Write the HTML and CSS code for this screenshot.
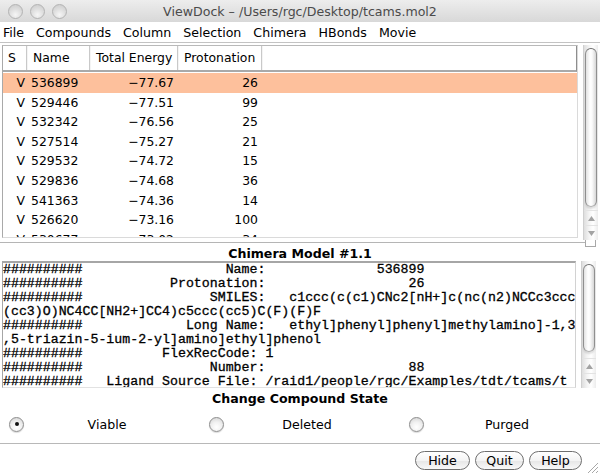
FILE: index.html
```html
<!DOCTYPE html>
<html>
<head>
<meta charset="utf-8">
<title>ViewDock</title>
<link rel="stylesheet" href="styles.css">
</head>
<body>
<div class="window">
  <div class="titlebar">
    <div class="lights"><span class="light"></span><span class="light"></span><span class="light"></span></div>
    <div class="title">ViewDock – /Users/rgc/Desktop/tcams.mol2</div>
    <div></div>
  </div>
  <div class="menubar">
    <span>File</span><span>Compounds</span><span>Column</span><span>Selection</span><span>Chimera</span><span>HBonds</span><span>Movie</span>
  </div>

  <div class="list-pane">
    <div class="table">
      <div class="thead">
        <div class="th">S</div>
        <div class="th">Name</div>
        <div class="th">Total Energy</div>
        <div class="th">Protonation</div>
        <div class="th filler"></div>
      </div>
      <div class="tbody">
        <div class="tr selected"><div class="td s">V</div><div class="td name">536899</div><div class="td num">−77.67</div><div class="td num">26</div><div></div></div>
        <div class="tr"><div class="td s">V</div><div class="td name">529446</div><div class="td num">−77.51</div><div class="td num">99</div><div></div></div>
        <div class="tr"><div class="td s">V</div><div class="td name">532342</div><div class="td num">−76.56</div><div class="td num">25</div><div></div></div>
        <div class="tr"><div class="td s">V</div><div class="td name">527514</div><div class="td num">−75.27</div><div class="td num">21</div><div></div></div>
        <div class="tr"><div class="td s">V</div><div class="td name">529532</div><div class="td num">−74.72</div><div class="td num">15</div><div></div></div>
        <div class="tr"><div class="td s">V</div><div class="td name">529836</div><div class="td num">−74.68</div><div class="td num">36</div><div></div></div>
        <div class="tr"><div class="td s">V</div><div class="td name">541363</div><div class="td num">−74.36</div><div class="td num">14</div><div></div></div>
        <div class="tr"><div class="td s">V</div><div class="td name">526620</div><div class="td num">−73.16</div><div class="td num">100</div><div></div></div>
        <div class="tr"><div class="td s">V</div><div class="td name">530677</div><div class="td num">−73.02</div><div class="td num">34</div><div></div></div>
      </div>
    </div>
    <div class="vscroll">
      <div class="track"><div class="thumb list-thumb"></div></div>
      <div class="arrow"><svg width="9" height="7" viewBox="0 0 9 7"><polygon points="4.5,1 8,6 1,6" fill="#a3a3a3"/></svg></div>
      <div class="arrow"><svg width="9" height="7" viewBox="0 0 9 7"><polygon points="1,1 8,1 4.5,6" fill="#a3a3a3"/></svg></div>
    </div>
  </div>

  <div class="sash"><div class="sash-line"></div><div class="sash-handle"></div></div>

  <div class="heading model">Chimera Model #1.1</div>

  <div class="text-pane">
<pre class="info">##########                  Name:              536899
##########           Protonation:                  26
##########                SMILES:   c1ccc(c(c1)CNc2[nH+]c(nc(n2)NCCc3ccc
(cc3)O)NC4CC[NH2+]CC4)c5ccc(cc5)C(F)(F)F
##########             Long Name:   ethyl]phenyl]phenyl]methylamino]-1,3
,5-triazin-5-ium-2-yl]amino]ethyl]phenol
##########          FlexRecCode: 1
##########                Number:                  88
##########   Ligand Source File: /raid1/people/rgc/Examples/tdt/tcams/t</pre>
    <div class="vscroll">
      <div class="track"><div class="thumb text-thumb"></div></div>
      <div class="arrow"><svg width="9" height="7" viewBox="0 0 9 7"><polygon points="4.5,1 8,6 1,6" fill="#a3a3a3"/></svg></div>
      <div class="arrow"><svg width="9" height="7" viewBox="0 0 9 7"><polygon points="1,1 8,1 4.5,6" fill="#a3a3a3"/></svg></div>
    </div>
  </div>

  <div class="heading state">Change Compound State</div>

  <div class="radios">
    <div class="radio-item"><span class="radio on"></span><span class="radio-label">Viable</span></div>
    <div class="radio-item"><span class="radio"></span><span class="radio-label">Deleted</span></div>
    <div class="radio-item"><span class="radio"></span><span class="radio-label">Purged</span></div>
  </div>

  <div class="buttons">
    <span class="btn hide">Hide</span>
    <span class="btn quit">Quit</span>
    <span class="btn help">Help</span>
  </div>

  <svg class="grip" width="11" height="11" viewBox="0 0 11 11">
    <line x1="1" y1="11" x2="11" y2="1" stroke="#a8a8a8" stroke-width="1"/>
    <line x1="5" y1="11" x2="11" y2="5" stroke="#a8a8a8" stroke-width="1"/>
    <line x1="9" y1="11" x2="11" y2="9" stroke="#a8a8a8" stroke-width="1"/>
  </svg>
</div>
</body>
</html>
```

FILE: styles.css
```css
html, body {
  margin: 0;
  padding: 0;
  background: #ffffff;
}

.window {
  position: relative;
  width: 600px;
  height: 474px;
  overflow: hidden;
  background: #ffffff;
  font-family: "DejaVu Sans", "Noto Sans", sans-serif;
  color: #000;
}

/* ---------- title bar ---------- */
.titlebar {
  height: 22px;
  display: grid;
  grid-template-columns: 1fr auto 1fr;
  align-items: center;
  background: linear-gradient(#ededed, #d8d8d8);
}

.lights {
  display: flex;
  gap: 7px;
  padding-left: 8px;
}

.light {
  width: 13px;
  height: 13px;
  border-radius: 50%;
  border: 1px solid #b3b3b3;
  background: radial-gradient(circle at 50% 75%, #f6f6f6 0%, #dedede 50%, #c9c9c9 100%);
  box-sizing: content-box;
}

.title {
  font-size: 12.6px;
  color: #4b4b4b;
  white-space: nowrap;
}

/* ---------- menu bar ---------- */
.menubar {
  height: 20px;
  display: flex;
  align-items: center;
  gap: 12px;
  padding-left: 3px;
  font-size: 12.6px;
  background: #fff;
  border-bottom: 1px solid #c3c3c3;
}

/* ---------- table ---------- */
.list-pane {
  display: flex;
  margin-top: 2px;
  height: 195px;
}

.table {
  margin-left: 2px;
  width: 574px;
  height: 191px;
  border-top: 1px solid #b9b9b9;
  border-left: 1px solid #a9a9a9;
  border-right: 1px solid #dadada;
  border-bottom: 1px solid #dadada;
  display: flex;
  flex-direction: column;
  font-size: 12.4px;
}

.thead,
.tr {
  display: grid;
  grid-template-columns: 24px 63px 88px 84px 1fr;
}

.thead {
  height: 24px;
  border-bottom: 2px solid #a9a9a9;
  border-right: 1px solid #8e8e8e;
  align-items: center;
}

.th {
  height: 24px;
  line-height: 24px;
  padding-left: 5px;
  border-right: 1px solid #c9c9c9;
  box-shadow: 1px 0 0 #f4f4f4;
  white-space: nowrap;
}

.th:nth-child(n+2) {
  padding-left: 6px;
}

.th.filler {
  border-right: none;
  box-shadow: none;
}

.tbody {
  flex: 1;
  overflow: hidden;
  background: #fff;
}

.tr {
  height: 19.6px;
  line-height: 19.6px;
}

.tr:first-child {
  margin-top: 1px;
}

.tr.selected {
  background: #fdc09c;
}

.td {
  white-space: nowrap;
}

.td.s {
  text-align: right;
  padding-right: 2px;
}

.td.name {
  padding-left: 4px;
}

.td.num {
  text-align: right;
  padding-right: 4px;
}

/* ---------- scrollbars ---------- */
.vscroll {
  width: 15px;
  margin-left: 5px;
  display: flex;
  flex-direction: column;
  border-left: 1px solid #cfcfcf;
  background: linear-gradient(to right, #dedede, #f3f3f3 35%, #ffffff 65%, #ececec);
  box-sizing: border-box;
}

.track {
  flex: 1;
  padding: 3px 1px 0 1px;
}

.thumb {
  border: 1px solid #8f8f8f;
  border-top-color: #6f6f6f;
  border-bottom-color: #b3b3b3;
  border-radius: 7px;
  background: linear-gradient(to right, #e2e2e2, #ffffff 40%, #fbfbfb 60%, #d6d6d6);
  box-shadow: 0 2px 2px rgba(0,0,0,0.12);
}

.list-thumb {
  height: 157px;
}

.text-thumb {
  height: 86px;
}

.arrow {
  height: 14px;
  display: flex;
  align-items: center;
  justify-content: center;
  border-top: 1px solid #e3e3e3;
}

/* ---------- sash ---------- */
.sash {
  height: 6px;
  display: flex;
  align-items: flex-start;
}

.sash-line {
  flex: 1;
  margin-top: 2px;
  height: 1px;
  background: #b5b5b5;
}

.sash-handle {
  width: 9px;
  height: 6px;
  margin-right: 4px;
  border: 1px solid #a8a8a8;
  border-top: none;
  background: #fff;
}

/* ---------- headings ---------- */
.heading {
  font-weight: bold;
  font-size: 12.6px;
  text-align: center;
  white-space: nowrap;
}

.heading.model {
  height: 15px;
  line-height: 15px;
}

.heading.state {
  height: 22px;
  line-height: 22px;
}

/* ---------- text pane ---------- */
.text-pane {
  display: flex;
  height: 127px;
}

.info {
  margin: 0 0 0 2px;
  width: 574px;
  height: 127px;
  box-sizing: border-box;
  overflow: hidden;
  border-top: 2px solid #a6a6a6;
  border-left: 1px solid #a6a6a6;
  border-right: 1px solid #d2d2d2;
  border-bottom: 1px solid #e2e2e2;
  font-family: "Liberation Mono", "DejaVu Sans Mono", monospace;
  font-size: 13.25px;
  line-height: 14px;
  white-space: pre;
  color: #000;
  -webkit-text-stroke: 0.3px #000;
}

/* ---------- radios ---------- */
.radios {
  height: 28px;
  display: grid;
  grid-template-columns: repeat(3, 200px);
  align-items: center;
  border-bottom: 1px solid #b8b8b8;
  padding-bottom: 5px;
  box-sizing: content-box;
  font-size: 12.6px;
}

.radio-item {
  display: flex;
  align-items: center;
}

.radio {
  width: 13px;
  height: 13px;
  margin-left: 9px;
  border-radius: 50%;
  border: 1px solid #8d8d8d;
  background: radial-gradient(circle at 50% 70%, #ffffff 0%, #f1f1f1 45%, #cfcfcf 100%);
  box-shadow: 0 1px 1px rgba(0,0,0,0.15);
  display: flex;
  align-items: center;
  justify-content: center;
  box-sizing: content-box;
}

.radio.on::after {
  content: "";
  width: 4px;
  height: 4px;
  border-radius: 50%;
  background: #111;
}

.radio-label {
  flex: 1;
  text-align: center;
  padding-right: 10px;
}

/* ---------- buttons ---------- */
.buttons {
  display: flex;
  justify-content: flex-end;
  gap: 5px;
  padding-top: 7px;
  padding-right: 18px;
}

.btn {
  height: 17px;
  line-height: 17px;
  border: 1px solid #6e6e6e;
  border-radius: 10px;
  background: linear-gradient(#ffffff, #f4f4f4 50%, #e6e6e6 51%, #f8f8f8);
  font-size: 12.6px;
  text-align: center;
}

.btn.hide { width: 53px; }
.btn.quit { width: 47px; }
.btn.help { width: 51px; }

.grip {
  position: absolute;
  right: 2px;
  bottom: 1px;
}
```
